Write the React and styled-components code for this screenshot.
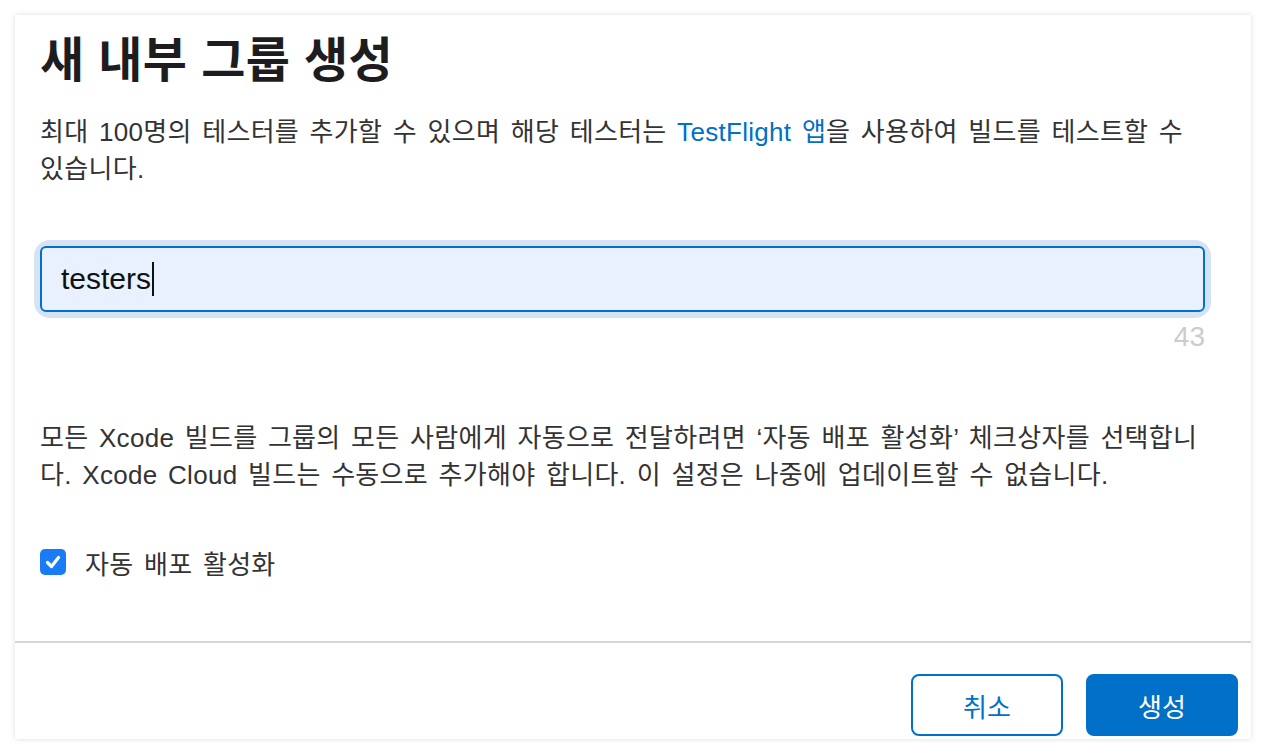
import React from "react";
import styled, { createGlobalStyle } from "styled-components";

const Global = createGlobalStyle`
  html, body { margin: 0; padding: 0; background: #ffffff; }
  body {
    font-family: "Liberation Sans", "Noto Sans CJK KR", sans-serif;
    color: #333333;
    -webkit-font-smoothing: antialiased;
  }
`;

const Page = styled.div`
  width: 1266px;
  height: 754px;
  padding: 15px 15px 0 15px;
  box-sizing: border-box;
  overflow: hidden;
`;

const Panel = styled.div`
  width: 1236px;
  height: 724px;
  background: #fff;
  box-shadow: 0 0 5px rgba(0, 0, 0, 0.14);
  display: flex;
  flex-direction: column;
`;

const Body = styled.div`
  padding: 10px 46px 0 25px;
  display: flex;
  flex-direction: column;
  height: 626px;
  box-sizing: border-box;
`;

const Title = styled.h1`
  margin: 0;
  font-size: 48px;
  line-height: 72px;
  font-weight: 700;
  letter-spacing: 0.4px;
  color: #1d1d1f;
`;

const Paragraph = styled.p`
  margin: ${(p) => p.$mt || 0}px 0 0 0;
  max-width: 1161px;
  font-size: 26px;
  line-height: 37px;
  letter-spacing: 0.3px;
  word-spacing: 3px;
  color: #333;
`;

const Link = styled.a`
  color: #0070c9;
  text-decoration: none;
`;

const InputRing = styled.div`
  margin-top: 58px;
  border-radius: 10px;
  box-shadow: 0 0 0 6px #d5e3f5;
`;

const InputBox = styled.div`
  height: 66px;
  box-sizing: border-box;
  border: 2px solid #0070c9;
  border-radius: 6px;
  background: #e8f1fd;
  padding: 0 19px;
  display: flex;
  align-items: center;
  font-size: 30px;
  color: #111;
`;

const Caret = styled.span`
  display: inline-block;
  width: 2px;
  height: 34px;
  background: #111;
  margin-left: 1px;
`;

const Counter = styled.div`
  margin-top: 10px;
  text-align: right;
  font-size: 28px;
  line-height: 30px;
  color: #cccccc;
`;

const CheckRow = styled.label`
  margin-top: 52px;
  height: 32px;
  display: flex;
  align-items: center;
  gap: 19px;
  font-size: 26px;
  letter-spacing: 0.3px;
  word-spacing: 3px;
  color: #333;
`;

const Box = styled.span`
  width: 26px;
  height: 26px;
  border-radius: 5px;
  background: #1a7cf5;
  display: flex;
  align-items: center;
  justify-content: center;
  flex-shrink: 0;
`;

const Divider = styled.div`
  height: 2px;
  background: #d6d6d6;
`;

const Footer = styled.div`
  display: flex;
  justify-content: flex-end;
  gap: 23px;
  padding: 31px 13px 0 0;
`;

const Button = styled.button`
  width: 152px;
  height: 62px;
  border-radius: 8px;
  border: 2px solid #0070c9;
  background: ${(p) => (p.$primary ? "#0070c9" : "#fff")};
  color: ${(p) => (p.$primary ? "#fff" : "#0070c9")};
  font-family: inherit;
  font-size: 26px;
  cursor: pointer;
`;

export default function App() {
  return (
    <>
      <Global />
      <Page>
        <Panel>
          <Body>
            <Title>새 내부 그룹 생성</Title>
            <Paragraph $mt={17}>
              <span>최대 100명의 테스터를 추가할 수 있으며 해당 테스터는 </span>
              <Link href="#">TestFlight 앱</Link>
              <span>을 사용하여 빌드를 테스트할 수 </span>
              <span>있습니다.</span>
            </Paragraph>
            <InputRing>
              <InputBox>
                testers<Caret />
              </InputBox>
            </InputRing>
            <Counter>43</Counter>
            <Paragraph $mt={68}>
              모든 Xcode 빌드를 그룹의 모든 사람에게 자동으로 전달하려면 ‘자동 배포 활성화’ 체크상자를 선택합니다. Xcode Cloud 빌드는 수동으로 추가해야 합니다. 이 설정은 나중에 업데이트할 수 없습니다.
            </Paragraph>
            <CheckRow>
              <Box>
                <svg width="18" height="18" viewBox="0 0 18 18">
                  <path d="M3.5 9.5 L7.5 13.5 L14.5 4.5" fill="none" stroke="#fff" strokeWidth="3.2" strokeLinecap="round" strokeLinejoin="round" />
                </svg>
              </Box>
              자동 배포 활성화
            </CheckRow>
          </Body>
          <Divider />
          <Footer>
            <Button>취소</Button>
            <Button $primary>생성</Button>
          </Footer>
        </Panel>
      </Page>
    </>
  );
}
